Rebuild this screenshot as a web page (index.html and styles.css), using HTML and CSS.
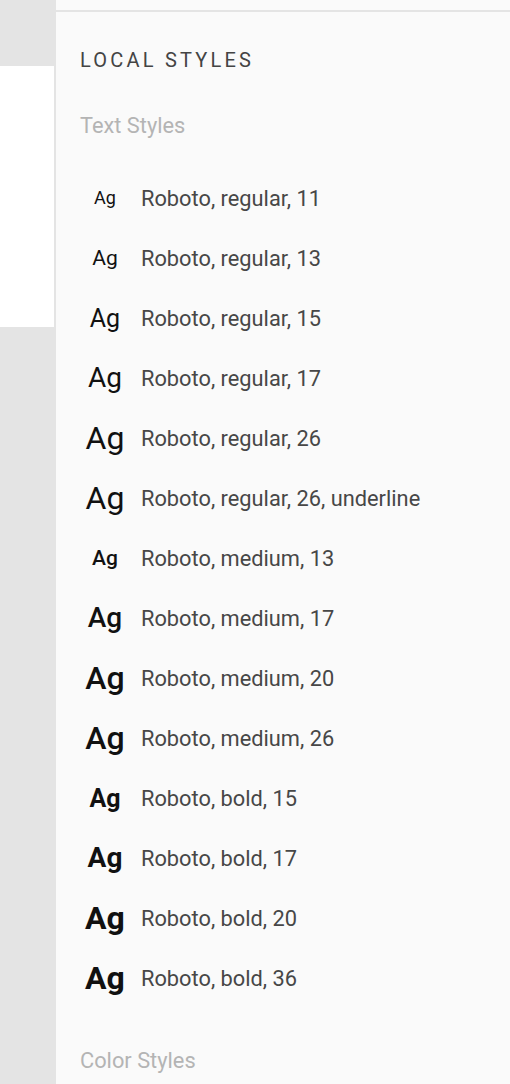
FILE: index.html
```html
<!DOCTYPE html>
<html>
<head>
<meta charset="utf-8">
<link rel="stylesheet" href="styles.css">
</head>
<body>
<div class="app">
  <div class="canvas-side">
    <div class="frame"></div>
  </div>
  <div class="panel">
    <div class="panel-top"></div>
    <h1 class="title">LOCAL STYLES</h1>
    <h2 class="section">Text Styles</h2>
    <ul class="styles">
      <li class="row"><span class="ag r11">Ag</span><span class="label">Roboto, regular, 11</span></li>
      <li class="row"><span class="ag r13">Ag</span><span class="label">Roboto, regular, 13</span></li>
      <li class="row"><span class="ag r15">Ag</span><span class="label">Roboto, regular, 15</span></li>
      <li class="row"><span class="ag r17">Ag</span><span class="label">Roboto, regular, 17</span></li>
      <li class="row"><span class="ag r26">Ag</span><span class="label">Roboto, regular, 26</span></li>
      <li class="row"><span class="ag r26">Ag</span><span class="label">Roboto, regular, 26, underline</span></li>
      <li class="row"><span class="ag m13">Ag</span><span class="label">Roboto, medium, 13</span></li>
      <li class="row"><span class="ag m17">Ag</span><span class="label">Roboto, medium, 17</span></li>
      <li class="row"><span class="ag m20">Ag</span><span class="label">Roboto, medium, 20</span></li>
      <li class="row"><span class="ag m26">Ag</span><span class="label">Roboto, medium, 26</span></li>
      <li class="row"><span class="ag b15">Ag</span><span class="label">Roboto, bold, 15</span></li>
      <li class="row"><span class="ag b17">Ag</span><span class="label">Roboto, bold, 17</span></li>
      <li class="row"><span class="ag b20">Ag</span><span class="label">Roboto, bold, 20</span></li>
      <li class="row"><span class="ag b36">Ag</span><span class="label">Roboto, bold, 36</span></li>
    </ul>
    <h2 class="section color">Color Styles</h2>
  </div>
</div>
</body>
</html>
```
FILE: styles.css
```css
* { box-sizing: border-box; }
html, body {
  margin: 0;
  padding: 0;
  height: 100%;
  overflow: hidden;
}
body {
  font-family: Roboto, "Liberation Sans", sans-serif;
  background: #e4e4e4;
}
.app {
  display: flex;
  height: 1084px;
}
.canvas-side {
  width: 56px;
  flex: none;
  background: #e4e4e4;
  padding-top: 66px;
}
.frame {
  width: 54px;
  height: 261px;
  background: #ffffff;
}
.panel {
  flex: 1;
  background: #fafafa;
  padding: 10px 24px 0 24px;
}
.panel-top {
  height: 2px;
  background: #e4e4e4;
  margin: 0 -24px;
}
.title {
  margin: 36px 0 0 0;
  height: 24px;
  line-height: 24px;
  font-size: 20px;
  font-weight: 400;
  letter-spacing: 3.2px;
  color: #444444;
}
.section {
  margin: 42px 0 0 0;
  height: 24px;
  line-height: 24px;
  font-size: 21.8px;
  font-weight: 400;
  color: #b4b4b4;
}
.section.color {
  margin-top: 41px;
}
.styles {
  list-style: none;
  margin: 30px 0 0 0;
  padding: 0;
}
.row {
  display: flex;
  align-items: center;
  height: 60px;
}
.ag {
  width: 50px;
  flex: none;
  text-align: center;
  color: #111111;
  line-height: 1;
}
.label {
  margin-left: 11px;
  font-size: 21.8px;
  color: #474747;
  white-space: nowrap;
}
.r11 { font-size: 18px; font-weight: 400; }
.r13 { font-size: 21px; font-weight: 400; }
.r15 { font-size: 25px; font-weight: 400; }
.r17 { font-size: 28px; font-weight: 400; }
.r26 { font-size: 32px; font-weight: 400; }
.m13 { font-size: 21px; font-weight: 500; }
.m17 { font-size: 28px; font-weight: 500; }
.m20 { font-size: 32px; font-weight: 500; }
.m26 { font-size: 32px; font-weight: 500; }
.b15 { font-size: 25px; font-weight: 700; }
.b17 { font-size: 28px; font-weight: 700; }
.b20 { font-size: 32px; font-weight: 700; }
.b36 { font-size: 32px; font-weight: 700; }
```
